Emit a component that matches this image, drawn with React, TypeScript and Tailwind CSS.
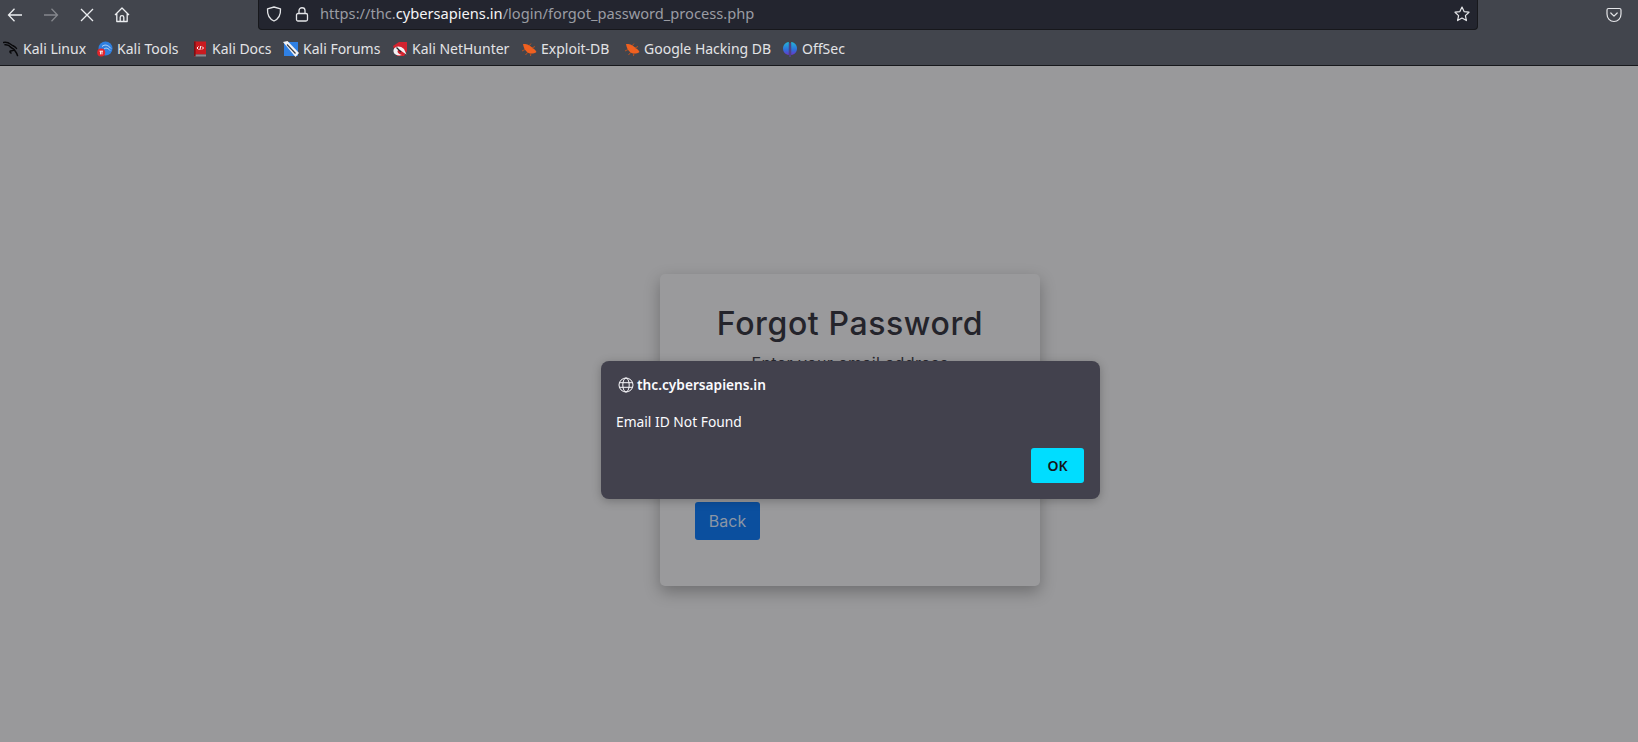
import React from "react";

const ui = { fontFamily: '"Noto Sans", "Open Sans", sans-serif' };

function KaliIcon() {
  return (
    <svg width="16" height="16" viewBox="0 0 16 16" fill="none" stroke="#08080a" strokeWidth="1.5" strokeLinecap="round" strokeLinejoin="round">
      <path d="M0.5 1.5 C3 1 6 2 8 3.5 C10.5 5.3 12.5 5.5 13.5 7.5 M2 3.8 C4.5 3.6 6.5 4.5 7.5 6 C8.5 7.5 11 7.5 11.5 9 C12 10.5 13.5 11 14.5 14.5 M11.5 9 C10 10 8.5 9.5 7.5 10 C6.8 10.4 6.8 11.6 8 12" />
    </svg>
  );
}
function ToolsIcon() {
  return (
    <svg width="16" height="16" viewBox="0 0 16 16">
      <circle cx="8.5" cy="7.5" r="7" fill="#2f7fe0" />
      <path d="M5 5.5 C8 3 11 4 14 7.5 M7 8 C9 6.5 11 7 13 9.5" fill="none" stroke="#cfe3f8" strokeWidth="0.9" />
      <circle cx="4.2" cy="11.6" r="4" fill="#e3242b" />
      <path d="M2.5 10.2 H6 M3.5 10.2 V13.4 M5 10.2 V13.4" stroke="#fff" strokeWidth="0.9" />
    </svg>
  );
}
function DocsIcon() {
  return (
    <svg width="16" height="16" viewBox="0 0 16 16">
      <rect x="2" y="0.5" width="12" height="13" fill="#c91a1f" />
      <rect x="2" y="13.5" width="12" height="2" fill="#8a8a90" />
      <rect x="2" y="0.5" width="1.6" height="15" fill="#7c1014" />
      <path d="M6.5 5.5 L5 7 L6.5 8.5 M10 5.5 L11.5 7 L10 8.5 M8.8 5 L7.8 9" fill="none" stroke="#fff" strokeWidth="1" />
    </svg>
  );
}
function ForumsIcon() {
  return (
    <svg width="16" height="16" viewBox="0 0 16 16">
      <path d="M1 1 H15 V15 H1 Z" fill="#2f80e4" />
      <path d="M0 1 L4.5 0 L16 12 L12.5 16 Z" fill="#f3f3f5" />
      <path d="M4 3.5 L12.5 12.5" stroke="#3b3f48" strokeWidth="1.2" />
    </svg>
  );
}
function NetHunterIcon() {
  return (
    <svg width="16" height="16" viewBox="0 0 16 16">
      <path d="M1 5 L7 1 H15 V10 L12 15 H5 Z" fill="#d2232f" />
      <path d="M1.5 9 C2.5 5 8 4 12 8 L14.5 13.5 L10 10.5 C8 8.5 5.5 8.5 5.5 10.5 C5.5 12.5 8 13.5 10 14 C5 15.5 1 13 1.5 9 Z" fill="#f2f2f4" />
      <path d="M4.5 6.5 L9 11" stroke="#25262c" strokeWidth="1.3" />
    </svg>
  );
}
function BugIcon() {
  return (
    <svg width="16" height="16" viewBox="0 0 16 16">
      <path d="M2 3 C5 3 8 3.5 10.5 6 C12.5 7.5 14.5 9 15.5 11 C12.5 13 8.5 13 6 11 C3.5 9 2.5 6 2 3 Z" fill="#ef6020" />
      <path d="M4 8.5 L1 10 M7 11 L4.5 14 M10 12 L9.5 15 M8 5 L10 2.5 M11 7 L14 5.5" stroke="#b85220" strokeWidth="1" fill="none" />
    </svg>
  );
}
function OffSecIcon() {
  return (
    <svg width="16" height="16" viewBox="0 0 16 16">
      <defs>
        <linearGradient id="os" x1="0" y1="0" x2="0" y2="1">
          <stop offset="0" stopColor="#22b5d8" />
          <stop offset="0.6" stopColor="#2f6fdc" />
          <stop offset="1" stopColor="#6a36c9" />
        </linearGradient>
      </defs>
      <path d="M6.8 1 C3 1.5 1 4.5 1 7.5 C1 11 3.5 13.5 6.8 14 Z" fill="url(#os)" />
      <path d="M9.2 1 C13 1.5 15 4.5 15 7.5 C15 11 12.5 13.5 9.2 14 Z" fill="url(#os)" />
      <rect x="7.5" y="2" width="1" height="14" fill="#5a3cc0" />
    </svg>
  );
}

const bookmarks: [React.ReactNode, string, string][] = [
  [<KaliIcon />, "Kali Linux", "w-[62px]"],
  [<ToolsIcon />, "Kali Tools", "w-[63px]"],
  [<DocsIcon />, "Kali Docs", "w-[59px]"],
  [<ForumsIcon />, "Kali Forums", "w-[77px]"],
  [<NetHunterIcon />, "Kali NetHunter", "w-[97px]"],
  [<BugIcon />, "Exploit-DB", "w-[71px]"],
  [<BugIcon />, "Google Hacking DB", "w-[126px]"],
  [<OffSecIcon />, "OffSec", "w-[44px]"],
];

export default function App() {
  return (
    <div className="relative flex h-[742px] w-[1638px] flex-col overflow-hidden bg-[#99999b]" style={ui}>
      <header className="h-[66px] shrink-0 border-b border-[#17181c] bg-[#42454d]">
        <div className="flex h-[30px] items-start">
          <div className="flex h-[29px] items-center pl-[7px]">
            <svg width="16" height="16" viewBox="0 0 16 16" fill="none" stroke="#eceef1" strokeWidth="1.3">
              <path d="M1.5 8 H15 M7.5 1.8 L1.5 8 L7.5 14.2" />
            </svg>
            <svg className="ml-[20px]" width="16" height="16" viewBox="0 0 16 16" fill="none" stroke="#85878d" strokeWidth="1.3">
              <path d="M1 8 H14.5 M8.5 1.8 L14.5 8 L8.5 14.2" />
            </svg>
            <svg className="ml-[21px]" width="14" height="14" viewBox="0 0 14 14" fill="none" stroke="#eceef1" strokeWidth="1.3">
              <path d="M1 1 L13 13 M13 1 L1 13" />
            </svg>
            <svg className="ml-[20px]" width="16" height="16" viewBox="0 0 16 16" fill="none" stroke="#eceef1" strokeWidth="1.3" strokeLinejoin="round">
              <path d="M1 8 L8 1 L15 8 M2.8 6.5 V14.5 H13.2 V6.5 M6.2 14.5 V10.2 C6.2 8.2 9.8 8.2 9.8 10.2 V14.5" />
            </svg>
          </div>
          <div className="ml-[128px] flex h-[30px] w-[1220px] items-center rounded-b-[4px] border-x border-b border-[#17181c] bg-[#23252f] pb-[1px] text-[14.65px]">
            <svg className="ml-[7px]" width="16" height="16" viewBox="0 0 16 16" fill="none" stroke="#e4e5e8" strokeWidth="1.3" strokeLinejoin="round">
              <path d="M8 1 L14.5 2.8 C14.8 8 13 12.8 8 15 C3 12.8 1.2 8 1.5 2.8 Z" />
            </svg>
            <svg className="ml-[12px]" width="16" height="16" viewBox="0 0 16 16" fill="none" stroke="#e4e5e8" strokeWidth="1.3">
              <rect x="2.5" y="7.5" width="11" height="7.5" rx="1.5" />
              <path d="M5 7.5 V4.5 C5 0.8 11 0.8 11 4.5 V7.5" />
            </svg>
            <span className="ml-[10px] text-[#9a9ca3]">
              https://thc.<span className="text-[#f4f4f6]">cybersapiens.in</span>/login/forgot_password_process.php
            </span>
            <svg className="ml-auto mr-[7px]" width="16" height="16" viewBox="0 0 16 16" fill="none" stroke="#e4e5e8" strokeWidth="1.2" strokeLinejoin="round">
              <path d="M8 1 L10.1 5.6 L15 6.2 L11.4 9.6 L12.4 14.6 L8 12.1 L3.6 14.6 L4.6 9.6 L1 6.2 L5.9 5.6 Z" />
            </svg>
          </div>
          <div className="ml-[128px] flex h-[29px] items-center">
            <svg width="16" height="16" viewBox="0 0 16 16" fill="none" stroke="#e4e5e8" strokeWidth="1.2" strokeLinejoin="round">
              <path d="M2.5 1.5 H13.5 C14.4 1.5 15 2.1 15 3 V7 C15 11.2 12 14.5 8 14.5 C4 14.5 1 11.2 1 7 V3 C1 2.1 1.6 1.5 2.5 1.5 Z" />
              <path d="M4.8 6 L8 9.2 L11.2 6" strokeLinecap="round" />
            </svg>
          </div>
        </div>
        <nav className="flex h-[35px] items-center gap-[12px] pl-[3px] pt-[2px] text-[14px] text-[#e2e3e6]">
          {bookmarks.map(([icon, label, w]) => (
            <div key={label} className="flex items-center gap-[4px]">
              <span className="flex h-4 w-4 shrink-0">{icon}</span>
              <span className={`${w} whitespace-nowrap`}>{label}</span>
            </div>
          ))}
        </nav>
      </header>

      <main className="flex-1 pl-[660px] pt-[208px]">
        <section
          className="h-[312px] w-[380px] rounded-[5px] bg-[#9a9a9c] px-[35px] pt-[31px] shadow-[0_6px_16px_rgba(0,0,0,0.28)]"
          style={{ fontFamily: 'Inter, "Noto Sans", sans-serif' }}
        >
          <h1 className="text-center text-[32px] font-medium leading-[38px] tracking-[0.6px] text-[#24242b]">Forgot Password</h1>
          <p className="mt-[9px] text-center text-[16px] leading-[22px] tracking-[0.4px] text-[#2a2a31]">Enter your email address</p>
          <div className="h-[128px]" />
          <button className="h-[38px] w-[65px] rounded-[3px] bg-[#0b4f9e] text-[16px] text-[#8a96a5]">Back</button>
        </section>
      </main>

      <div className="absolute left-[601px] top-[361px] flex h-[138px] w-[499px] flex-col rounded-[8px] bg-[#42414d] px-[16px] pt-[15px] text-[#fbfbfe] shadow-[0_2px_10px_rgba(0,0,0,0.25)]">
        <div className="flex h-[18px] items-center gap-[3px] pl-[1px] text-[13.7px] font-semibold">
          <svg width="16" height="16" viewBox="0 0 16 16" fill="none" stroke="#fbfbfe" strokeWidth="1">
            <circle cx="8" cy="8" r="7" />
            <ellipse cx="8" cy="8" rx="3.2" ry="7" />
            <path d="M1.3 5.7 H14.7 M1.3 10.3 H14.7" />
          </svg>
          <span>thc.cybersapiens.in</span>
        </div>
        <p className="mt-[18px] -ml-[1px] text-[13.8px] leading-[20px]">Email ID Not Found</p>
        <div className="mt-[16px] flex justify-end">
          <button className="h-[35px] w-[53px] rounded-[3px] bg-[#00ddff] text-[14px] font-semibold text-[#15141a]">OK</button>
        </div>
      </div>
    </div>
  );
}
